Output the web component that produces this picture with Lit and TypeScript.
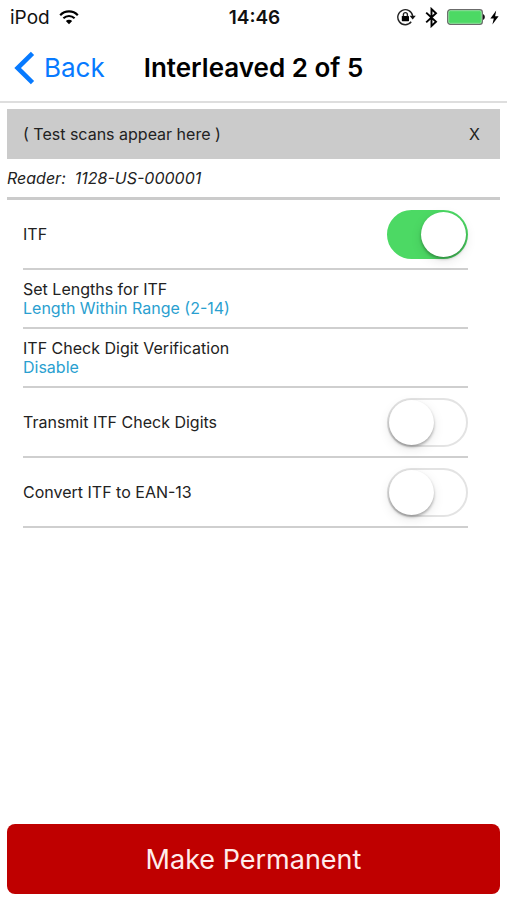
import { LitElement, html, css } from "lit";
import { customElement, property, state } from "lit/decorators.js";

@customElement("status-bar")
class StatusBar extends LitElement {
  static styles = css`
    :host {
      display: grid;
      grid-template-columns: 1fr auto 1fr;
      align-items: center;
      height: 34px;
      padding: 0 8px 0 10px;
      font-size: 19px;
      color: #111;
    }
    .group {
      display: flex;
      align-items: center;
      gap: 9px;
    }
    .right {
      justify-content: flex-end;
    }
    .time {
      font-weight: 600;
    }
    .power {
      display: flex;
      align-items: center;
      gap: 5px;
    }
    svg {
      display: block;
    }
  `;

  render() {
    return html`
      <div class="group">
        <span>iPod</span>
        <svg width="20" height="15" viewBox="0 0 20 15" fill="none" stroke="#000" stroke-width="2.2" aria-label="Wi-Fi">
          <path d="M1.2 5.2C6 .2 14 .2 18.8 5.2" />
          <path d="M4.400 8.300C7.600 5.200 12.400 5.200 15.600 8.300" />
          <path d="M10 14.200 6.800 11C8.600 9.300 11.400 9.300 13.200 11Z" fill="#000" stroke="none" />
        </svg>
      </div>
      <span class="time">14:46</span>
      <div class="group right">
        <svg width="19" height="18" viewBox="0 0 19 18" fill="none" stroke="#222" aria-label="Rotation lock">
          <path d="M14.200 13.800A7.500 7.500 0 1 1 15.700 8" stroke-width="1.400" />
          <path d="M12.600 7.800h6.200l-3.100 3.600z" fill="#111" stroke="none" />
          <rect x="4.800" y="8" width="7.200" height="5.200" rx=".6" fill="#000" stroke="none" />
          <path d="M6.400 8.200V6.600a2 2 0 0 1 4 0v1.600" stroke-width="1.400" />
        </svg>
        <svg width="13" height="21" viewBox="0 0 13 21" fill="none" stroke="#000" stroke-width="1.900" aria-label="Bluetooth">
          <path d="M1.200 5.600 11 14.800 6.500 19V2L11 6.200 1.200 15.400" />
        </svg>
        <div class="power">
          <svg width="38" height="16" viewBox="0 0 38 16" aria-label="Battery full">
            <rect x=".7" y=".7" width="34.600" height="14.600" rx="2.600" fill="#4cd964" stroke="#6b6b6b" stroke-width="1.300" />
            <rect x="1.700" y="1.700" width="32.600" height="12.600" rx="1.600" fill="none" stroke="#b9efc2" stroke-width=".6" />
            <path d="M36 5.200c2.400.5 2.400 5.100 0 5.600z" fill="#111" />
          </svg>
          <svg width="9" height="15" viewBox="0 0 9 15" aria-label="Charging">
            <path d="M6.200.6.400 8.400h3.400L2.400 14.400 8.600 6.300H5.100z" fill="#000" />
          </svg>
        </div>
      </div>
    `;
  }
}

@customElement("toggle-row")
class ToggleRow extends LitElement {
  @property() label = "";
  @property({ type: Boolean }) on = false;

  static styles = css`
    :host {
      display: block;
      border-bottom: 2px solid #cfcfcf;
    }
    .row {
      display: flex;
      align-items: center;
      justify-content: space-between;
      height: 68px;
    }
    .switch {
      appearance: none;
      box-sizing: border-box;
      flex: none;
      width: 81px;
      height: 49px;
      margin: 0;
      padding: 1px;
      border: 2px solid #e3e3e3;
      border-radius: 25px;
      background: #fff;
      display: flex;
      align-items: center;
      cursor: pointer;
    }
    .switch::before {
      content: "";
      width: 45px;
      height: 45px;
      margin: 0 -1px;
      flex: none;
      border-radius: 50%;
      background: #fff;
      box-shadow: 0 2px 3px rgba(0, 0, 0, 0.3), 0 4px 12px rgba(0, 0, 0, 0.1);
    }
    .switch:checked {
      justify-content: flex-end;
      border-color: #4cd964;
      background: #4cd964;
    }
  `;

  render() {
    return html`
      <div class="row">
        <label for="switch">${this.label}</label>
        <input
          id="switch"
          class="switch"
          type="checkbox"
          role="switch"
          .checked=${this.on}
          @change=${(e: Event) => (this.on = (e.target as HTMLInputElement).checked)}
        />
      </div>
    `;
  }
}

@customElement("app-root")
class AppRoot extends LitElement {
  @state() private scan = "( Test scans appear here )";

  static styles = css`
    :host {
      display: flex;
      flex-direction: column;
      box-sizing: border-box;
      min-height: 100vh;
      background: #fff;
      color: #222;
      font-family: Inter, "Liberation Sans", sans-serif;
      font-size: 16px;
      line-height: 19px;
    }
    button {
      font: inherit;
      border: 0;
      cursor: pointer;
    }
    .nav {
      display: grid;
      grid-template-columns: 1fr auto 1fr;
      align-items: center;
      height: 67px;
      padding: 0 14px;
      border-bottom: 2px solid #dedede;
    }
    .back {
      display: flex;
      align-items: center;
      gap: 9px;
      color: #077aff;
      font-size: 26px;
      line-height: 32px;
      text-decoration: none;
    }
    h1 {
      margin: 0;
      color: #000;
      font-size: 26px;
      line-height: 32px;
      font-weight: 600;
    }
    main {
      display: flex;
      flex-direction: column;
      flex: 1;
      padding: 6px 7px;
    }
    .scan {
      display: flex;
      align-items: center;
      justify-content: space-between;
      height: 50px;
      padding: 0 16px;
      background: #cbcbcb;
    }
    .clear {
      padding: 4px;
      background: none;
      color: inherit;
    }
    .reader {
      margin: 0;
      padding: 10px 0 9px;
      border-bottom: 3px solid #cbcbcb;
      font-style: italic;
      white-space: pre;
    }
    .settings {
      padding: 0 32px 0 16px;
    }
    .choice {
      display: block;
      width: 100%;
      padding: 10px 0 9px;
      background: none;
      border-bottom: 2px solid #cfcfcf;
      color: inherit;
      text-align: left;
    }
    .choice span {
      display: block;
    }
    .value {
      color: #2a9fd0;
    }
    .permanent {
      height: 70px;
      margin-top: auto;
      border-radius: 8px;
      background: #bf0000;
      color: #ffecec;
      font-size: 27px;
    }
  `;

  private choice(label: string, value: string) {
    return html`
      <button class="choice"><span>${label}</span><span class="value">${value}</span></button>
    `;
  }

  render() {
    return html`
      <status-bar></status-bar>
      <header class="nav">
        <a class="back" href="#">
          <svg width="21" height="34" viewBox="0 0 21 34" fill="none" stroke="#077aff" stroke-width="4.600" aria-hidden="true">
            <path d="M18.500 2.300 3.600 17 18.500 31.700" />
          </svg>
          Back
        </a>
        <h1>Interleaved 2 of 5</h1>
      </header>
      <main>
        <div class="scan">
          <span>${this.scan}</span>
          <button class="clear" aria-label="Clear scans" @click=${() => (this.scan = "")}>X</button>
        </div>
        <p class="reader">Reader:  1128-US-000001</p>
        <section class="settings">
          <toggle-row label="ITF" on></toggle-row>
          ${this.choice("Set Lengths for ITF", "Length Within Range (2-14)")}
          ${this.choice("ITF Check Digit Verification", "Disable")}
          <toggle-row label="Transmit ITF Check Digits"></toggle-row>
          <toggle-row label="Convert ITF to EAN-13"></toggle-row>
        </section>
        <button class="permanent">Make Permanent</button>
      </main>
    `;
  }
}
